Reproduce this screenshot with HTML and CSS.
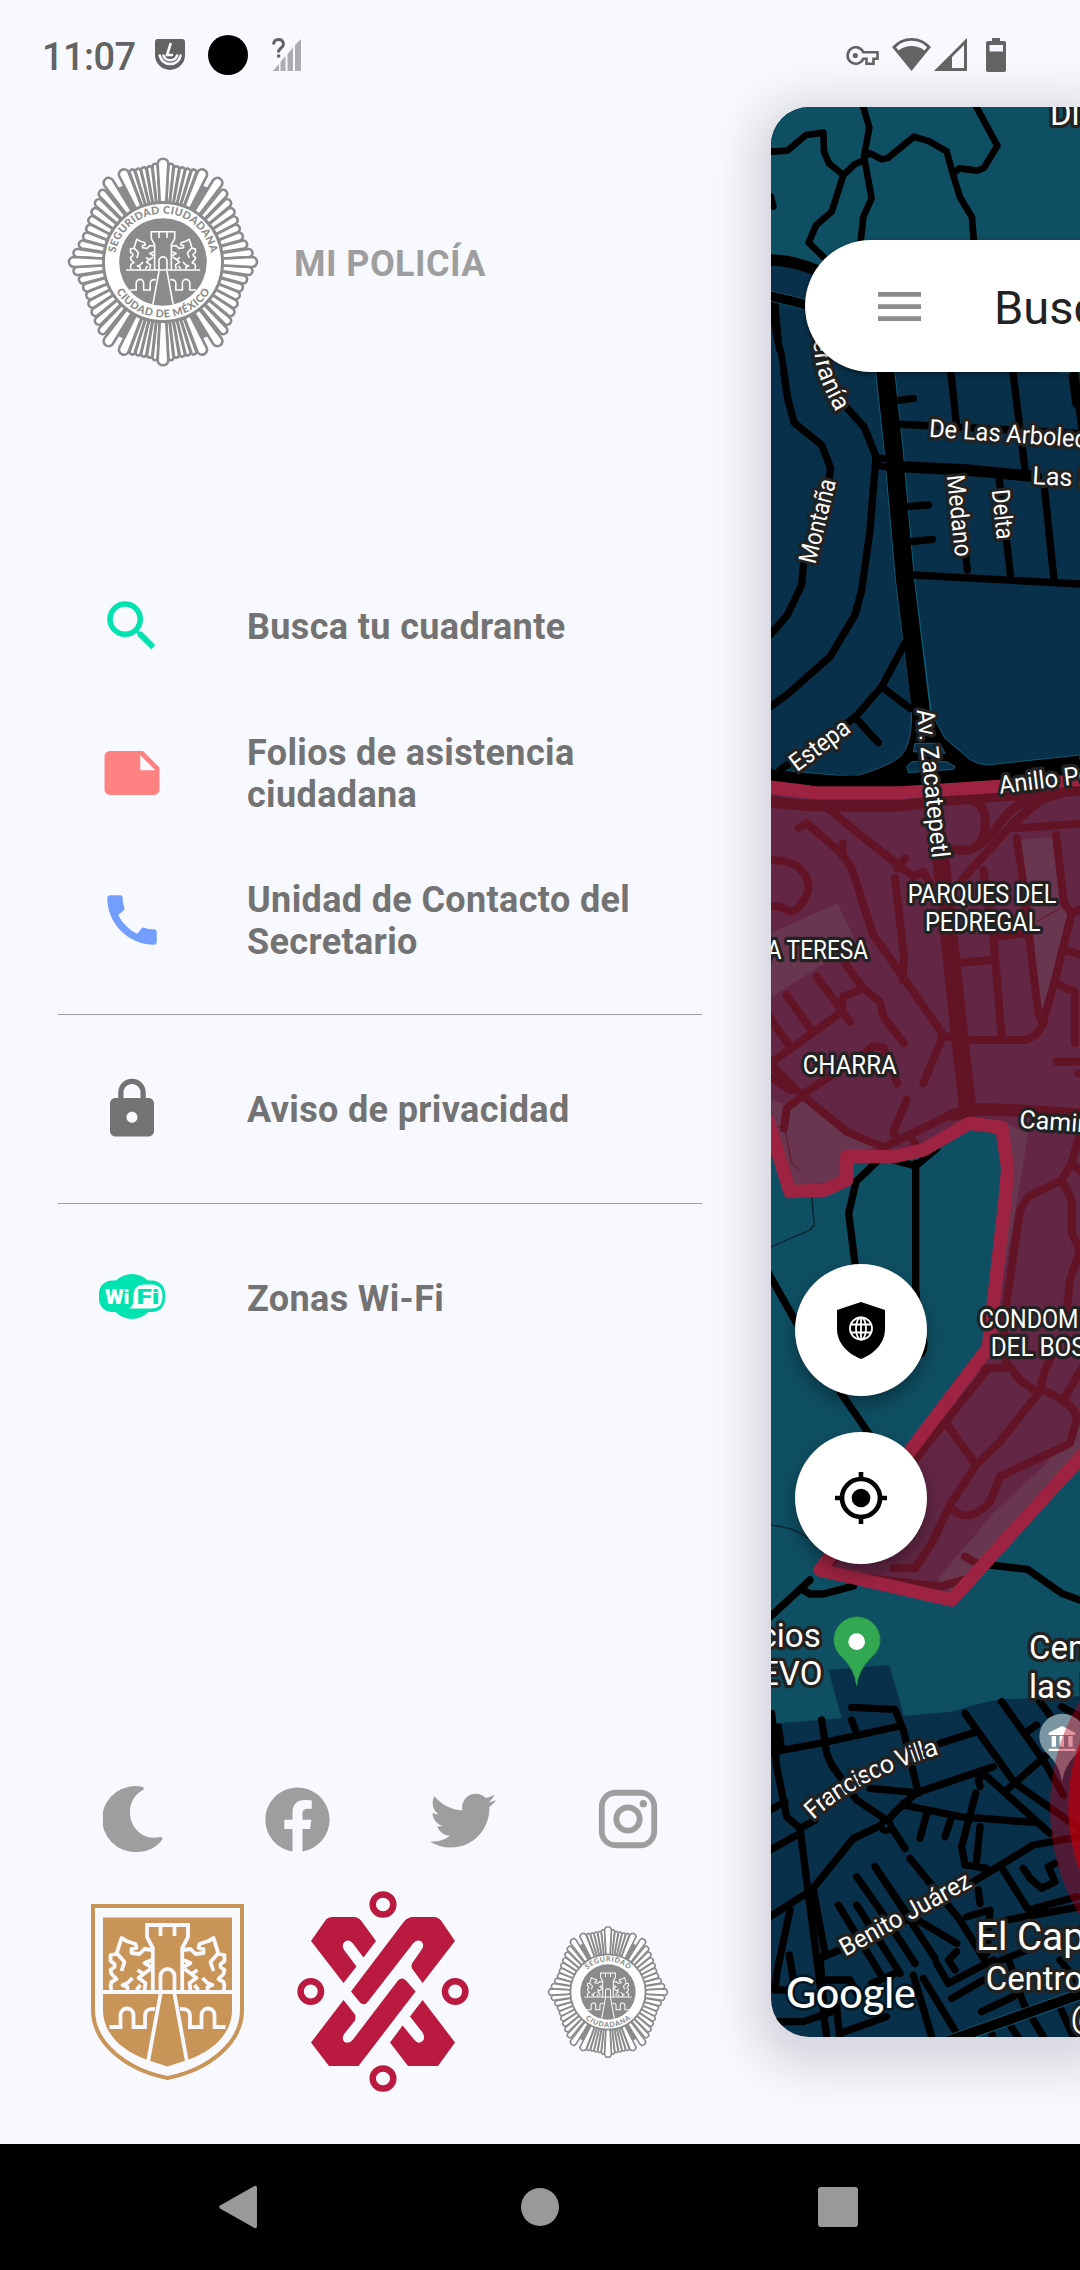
FILE: index.html
```html
<!DOCTYPE html>
<html lang="es">
<head>
<meta charset="utf-8">
<title>Mi Policía</title>
<link rel="stylesheet" href="styles.css">
</head>
<body>
<svg class="defs" width="0" height="0" aria-hidden="true">
  <defs>
    <!-- One quadrant of badge rays; mirrored to build the star -->
    <g id="rays">
      <path transform="rotate(4.7)" d="M0 0L-2.6-96a2.6 2.6 0 0 1 5.2 0z"/>
      <path transform="rotate(8.2)" d="M0 0L-2.6-94a2.6 2.6 0 0 1 5.2 0z"/>
      <path transform="rotate(11.8)" d="M0 0L-2.6-94a2.6 2.6 0 0 1 5.2 0z"/>
      <path transform="rotate(15.3)" d="M0 0L-2.6-94a2.6 2.6 0 0 1 5.2 0z"/>
      <path transform="rotate(18.9)" d="M0 0L-2.6-95a2.6 2.6 0 0 1 5.2 0z"/>
      <path transform="rotate(41.5)" d="M0 0L-4-91a4 4 0 0 1 8 0z"/>
      <path transform="rotate(47.5)" d="M0 0L-4-87a4 4 0 0 1 8 0z"/>
      <path transform="rotate(53.5)" d="M0 0L-4-84a4 4 0 0 1 8 0z"/>
      <path transform="rotate(59.5)" d="M0 0L-4-82a4 4 0 0 1 8 0z"/>
      <path transform="rotate(65.5)" d="M0 0L-4-80a4 4 0 0 1 8 0z"/>
      <path transform="rotate(71.5)" d="M0 0L-4-80a4 4 0 0 1 8 0z"/>
      <path transform="rotate(77.7)" d="M0 0L-4-82a4 4 0 0 1 8 0z"/>
      <path transform="rotate(84)" d="M0 0L-4-86a4 4 0 0 1 8 0z"/>
      <path d="M26-50L36-78 50-72 36-45z" class="ray-gap"/>
      <path transform="rotate(24)" d="M0 0L-5-96a5 5 0 0 1 10 0z"/>
      <path transform="rotate(34.5)" d="M0 0L-5-96a5 5 0 0 1 10 0z"/>
    </g>
    <g id="lion" stroke-linejoin="round">
      <path d="M-56-2L-57-6-56-10-51-13-56-18-57-22-53-25-53-28-57-31-57-37-51-38-46-54-41-51-32-48-31-44-36-43-36-39-28-38-23-43-16-42M-50-38L-43-30-46-21M-16-32L-23-29-16-25M-30-22L-24-18-17-23M-24-18L-29-14-22-9-23-2M-35-14L-40-9-45-7-40-5V-1M-27-7L-31-2"/>
    </g>
    <g id="castle">
      <path d="M-65 0H65M-14.7 0V-44L-20.5-55V-67H20.5V-55L14.7-44V0M-7-66V-56M7-66V-56M-7 0V-16a7 7 0 0 1 14 0V0"/>
      <path d="M-7 2L-19.5 70M7 2L19.5 70M-58 35H-47V23a6.5 6.5 0 0 1 13 0V35H-22.5V24q0-8 10-7M58 35H47V23a6.5 6.5 0 0 0-13 0V35H22.5V24q0-8-10-7"/>
      <use href="#lion"/><use href="#lion" transform="scale(-1 1)"/>
    </g>
    <g id="badge">
      <g fill="#fff" stroke="#8a8b8c" stroke-width="2.6">
        <use href="#rays"/><use href="#rays" transform="scale(-1 1)"/><use href="#rays" transform="scale(1 -1)"/><use href="#rays" transform="scale(-1 -1)"/>
        <path id="v-ray" d="M0 0L-5.3-98a5.3 5.3 0 0 1 10.6 0z"/>
        <use href="#v-ray" transform="scale(1 -1)"/>
        <path id="h-ray" d="M0 0L89-5a5 5 0 0 1 0 10z"/>
        <use href="#h-ray" transform="scale(-1 1)"/>
      </g>
      <circle r="59.5" fill="#fff" stroke="#8a8b8c" stroke-width="3"/>
      <circle r="43.8" fill="#8a8b8c"/>
      <g clip-path="url(#disc)"><use href="#castle" transform="translate(0 8) scale(.57)" fill="none" stroke="#fff" stroke-width="2.8"/></g>
    </g>
    <clipPath id="disc"><circle r="43.8"/></clipPath>
    <path id="arc-top" d="M-48.5 0A48.5 48.5 0 0 1 48.5 0"/>
    <path id="arc-bottom" d="M-55.5 0A55.5 55.5 0 0 0 55.5 0"/>
  </defs>
</svg>

<div class="screen">
  <div class="app">
    <header class="status">
      <span class="clock">11:07</span>
      <svg class="s-shield" width="30" height="32" viewBox="0 0 30 32"><path fill="#636363" d="M3 0H27a3 3 0 0 1 3 3V16a15 15 0 0 1-30 0V3a3 3 0 0 1 3-3z"/><path fill="none" stroke="#f8f9ff" stroke-width="2.6" stroke-linecap="round" d="M15.500 5L12 16h5M8.500 16.500a7 6.500 0 0 0 13.500 0M4.800 16.500a10.600 10.600 0 0 0 20.800 0"/></svg>
      <span class="camera"></span>
      <svg class="s-nosim" width="29" height="33" viewBox="0 0 29 33"><path fill="#acacb2" d="M1 33L7 26V33zM8.500 33V24L13.500 18V33zM15.500 33V16L21 9.500V33zM23 33V7L29 1V33z"/><path fill="none" stroke="#636363" stroke-width="3" d="M1.500 6.500Q2 1.500 6.500 1.500T11.500 6Q11.500 8 8.500 10.500 6.500 12 6.500 14.500"/><path fill="#636363" d="M5 16.500h3.200v3H5z"/></svg>
      <span class="push"></span>
      <svg class="s-key" width="33" height="20" viewBox="0 0 33 20"><path fill="none" stroke="#636363" stroke-width="2.600" d="M17.300 6.200A8.200 8.200 0 1 0 17.300 12.800H20.500V17.800H27.500V12.800H31.500V6.200Z"/><circle cx="9.300" cy="9.500" r="2.600" fill="#636363"/></svg>
      <svg class="s-wifi" width="39" height="33" viewBox="0 0 39 33"><path fill="#636363" fill-rule="evenodd" d="M19.500 33L0 9Q8 0 19.500 0T39 9zM19.500 2.800Q9.500 2.800 4 9.300L6.500 12.500Q12 8 19.500 8T32.500 12.500L35 9.300Q29.500 2.800 19.500 2.800z"/></svg>
      <svg class="s-cell" width="33" height="33" viewBox="0 0 33 33"><path fill="#636363" fill-rule="evenodd" d="M0 33L33 0V33zM18 30H30V7L18 19z"/></svg>
      <svg class="s-batt" width="20" height="34" viewBox="0 0 20 34"><path fill="#636363" fill-rule="evenodd" d="M6 0H14V3H18a2 2 0 0 1 2 2V32a2 2 0 0 1-2 2H2a2 2 0 0 1-2-2V5a2 2 0 0 1 2-2H6zM3.500 7V13.500H17V7z"/></svg>
    </header>

    <main class="main">
      <nav class="drawer">
        <div class="brand">
          <svg class="brand-badge" width="192" height="212" viewBox="-96 -106 192 212">
            <use href="#badge"/>
            <g class="ring-text" font-size="10.600"><text text-anchor="middle"><textPath href="#arc-top" startOffset="50%" textLength="134">SEGURIDAD CIUDADANA</textPath></text>
            <text text-anchor="middle"><textPath href="#arc-bottom" startOffset="50%" textLength="112">CIUDAD DE MÉXICO</textPath></text></g>
          </svg>
          <h1>MI POLICÍA</h1>
        </div>

        <ul class="menu">
          <li><svg class="ico" viewBox="0 0 24 24" fill="#00e3b0"><path d="M15.500 14h-.79l-.28-.27A6.471 6.471 0 0 0 16 9.500 6.500 6.500 0 1 0 9.500 16c1.610 0 3.090-.59 4.230-1.570l.27.28v.79l5 4.990L20.490 19l-4.990-5zm-6 0C7.010 14 5 11.990 5 9.500S7.010 5 9.500 5 14 7.010 14 9.500 11.990 14 9.500 14z"/></svg><span>Busca tu cuadrante</span></li>
          <li><svg class="ico" viewBox="0 0 24 24" fill="#ff8283"><path d="M22 10l-6-6H4c-1.100 0-2 .9-2 2v12.010c0 1.100.9 1.990 2 1.990l16-.01c1.100 0 2-.89 2-1.990v-8zm-7-4.500l5.500 5.500H15V5.500z"/></svg><span>Folios de asistencia ciudadana</span></li>
          <li><svg class="ico" viewBox="0 0 24 24" fill="#739eff"><path d="M20.010 15.380c-1.230 0-2.420-.2-3.530-.56a.977.977 0 0 0-1.010.24l-1.570 1.970c-2.830-1.350-5.480-3.900-6.890-6.830l1.950-1.660c.27-.28.35-.67.24-1.020-.37-1.110-.56-2.300-.56-3.530 0-.54-.45-.99-.99-.99H4.190C3.650 3 3 3.240 3 3.990 3 13.280 10.730 21 20.010 21c.71 0 .99-.63.99-1.180v-3.450c0-.54-.45-.99-.99-.99z"/></svg><span>Unidad de Contacto del Secretario</span></li>
          <li class="rule"></li>
          <li><svg class="ico" viewBox="0 0 24 24" fill="#737373"><path d="M18 8h-1V6c0-2.760-2.240-5-5-5S7 3.240 7 6v2H6c-1.100 0-2 .9-2 2v10c0 1.100.9 2 2 2h12c1.100 0 2-.9 2-2V10c0-1.100-.9-2-2-2zm-6 9c-1.100 0-2-.9-2-2s.9-2 2-2 2 .9 2 2-.9 2-2 2zm3.100-9H8.900V6c0-1.710 1.390-3.100 3.100-3.100 1.710 0 3.100 1.390 3.100 3.100v2z"/></svg><span>Aviso de privacidad</span></li>
          <li class="rule"></li>
          <li><svg class="ico" viewBox="0 0 66 66"><circle cx="33" cy="31.500" r="22.500" fill="#00e3b0"/><rect y="15.500" width="66" height="31.500" rx="13" fill="#00e3b0"/><path fill="#fff" d="M30 43.500Q34.500 41 34.500 35V31Q34.500 19.500 46 19.500H52.500Q63.500 19.500 63.500 31.500T52.500 43.500z"/><g font-family="Roboto" font-weight="900" font-size="20"><text x="6" y="39" textLength="24.500" lengthAdjust="spacingAndGlyphs" fill="#fff">Wi</text><text x="37.500" y="39" textLength="23" lengthAdjust="spacingAndGlyphs" fill="#00e3b0">Fi</text></g></svg><span>Zonas Wi-Fi</span></li>
        </ul>

        <div class="social">
          <svg width="60" height="66" viewBox="0 0 60 66"><path fill="#9e9e9e" d="M40 1C41 2 41 3 40 4 31 9 27 17 27 26 27 42 40 55 57 51Q60 50.500 59 54C53 62 44 66 34 66A33 33 0 1 1 40 1z"/></svg>
          <svg width="77" height="77" viewBox="0 0 24 24"><path fill="#9e9e9e" d="M12 2.040C6.500 2.040 2 6.530 2 12.060C2 17.060 5.660 21.210 10.440 21.960V14.960H7.900V12.060H10.440V9.850C10.440 7.340 11.930 5.960 14.220 5.960C15.310 5.960 16.450 6.150 16.450 6.150V8.620H15.190C13.950 8.620 13.560 9.390 13.560 10.180V12.060H16.340L15.890 14.960H13.560V21.960A10 10 0 0 0 22 12.060C22 6.530 17.500 2.040 12 2.040Z"/></svg>
          <svg width="76" height="76" viewBox="0 0 24 24"><path fill="#9e9e9e" d="M22.460,6C21.690,6.350 20.860,6.580 20,6.690C20.880,6.160 21.560,5.320 21.880,4.310C21.050,4.810 20.130,5.160 19.160,5.360C18.370,4.500 17.260,4 16,4C13.650,4 11.730,5.920 11.730,8.290C11.730,8.630 11.770,8.960 11.840,9.270C8.280,9.090 5.110,7.380 3,4.790C2.630,5.420 2.420,6.160 2.420,6.940C2.420,8.430 3.170,9.750 4.330,10.500C3.620,10.500 2.960,10.300 2.380,10C2.380,10 2.380,10 2.380,10.030C2.380,12.110 3.860,13.850 5.820,14.240C5.460,14.340 5.080,14.390 4.690,14.390C4.420,14.390 4.150,14.360 3.890,14.310C4.430,16 6,17.260 7.890,17.290C6.430,18.450 4.580,19.130 2.560,19.130C2.220,19.130 1.880,19.110 1.540,19.070C3.440,20.290 5.700,21 8.120,21C16,21 20.330,14.460 20.330,8.790C20.330,8.600 20.330,8.420 20.320,8.230C21.160,7.630 21.880,6.870 22.460,6Z"/></svg>
          <svg width="70" height="70" viewBox="0 0 24 24"><path fill="#9e9e9e" d="M7.800,2H16.200C19.400,2 22,4.600 22,7.800V16.200A5.800,5.800 0 0,1 16.200,22H7.800C4.600,22 2,19.400 2,16.200V7.800A5.800,5.800 0 0,1 7.800,2M7.600,4A3.600,3.600 0 0,0 4,7.600V16.400C4,18.390 5.610,20 7.600,20H16.400A3.600,3.600 0 0,0 20,16.400V7.600C20,5.610 18.390,4 16.400,4H7.600M17.250,5.500A1.250,1.250 0 0,1 18.500,6.750A1.250,1.250 0 0,1 17.250,8A1.250,1.250 0 0,1 16,6.750A1.250,1.250 0 0,1 17.250,5.500M12,7A5,5 0 0,1 17,12A5,5 0 0,1 12,17A5,5 0 0,1 7,12A5,5 0 0,1 12,7M12,9A3,3 0 0,0 9,12A3,3 0 0,0 12,15A3,3 0 0,0 15,12A3,3 0 0,0 12,9Z"/></svg>
        </div>

        <div class="logos">
          <svg width="153" height="176" viewBox="-76.500 -88 153 176">
            <path fill="none" stroke="#c99457" stroke-width="4" d="M-74.500-86H74.500V18C74.500 52 40 78 0 86-40 78-74.500 52-74.500 18z"/>
            <path fill="#c99457" d="M-64.500-74.500H64.500V18C64.500 40 48 58 20 68L0 74.500-20 68C-48 58-64.500 40-64.500 18z"/>
            <use href="#castle" fill="none" stroke="#f8f9ff" stroke-width="3.800"/>
          </svg>
          <svg width="172" height="201" viewBox="-86 -100.500 172 201">
            <g fill="none" stroke="#ba1a3f" stroke-width="6.500"><ellipse cy="-87" rx="10.300" ry="10"/><ellipse cy="87" rx="10.300" ry="10"/><circle cx="-72.200" r="10.200"/><circle cx="72.200" r="10.200"/></g>
            <g fill="#ba1a3f">
              <path d="M-72-50.500L-57-72Q-55-74.500-51-74.500H-29Q-25-74.500-22-71L-7-50.500-19.500-34-30-48Q-34-53-38.500-49.500-42-46-38.500-41L-26.500-25-39.500-8.500z"/>
              <path d="M-32 0L21-70Q25-74.500 30-74.500H51Q55-74.500 58-71L72-50.500 39.600-8.500 29-23Q28-26 29-28L38-41Q42-46 38.500-50 34-53 30-48L-15 10Q-19 15-23 11z"/>
              <path d="M-72 51L-39.500 8.500-28 23Q-27 26-28 29L-38.500 42Q-42 47-38.500 50.500-34 53-30 48L15-11Q19-15 23-11L32.600 0-24.500 74.500H-54z"/>
              <path d="M39.600 8.500L72 51 55 74.500H25L7 51 19.600 34 31 48Q35 53 39 50 43 47 39.500 41L27 25z"/>
            </g>
          </svg>
          <svg width="122" height="134" viewBox="-96 -106 192 212">
            <use href="#badge"/>
            <g class="ring-text" font-size="11"><text text-anchor="middle"><textPath href="#arc-top" startOffset="50%" textLength="72">SEGURIDAD</textPath></text>
            <text text-anchor="middle"><textPath href="#arc-bottom" startOffset="50%" textLength="78">CIUDADANA</textPath></text></g>
          </svg>
        </div>
      </nav>

      <section class="map-card">
        <svg class="map" width="309" height="1930" viewBox="771 107 309 1930">
          <rect x="771" y="107" width="309" height="1930" fill="#09304a"/>
          <!-- north: park -->
          <g transform="scale(.33333) translate(2220 0)">
            <path fill="#0f4f63" d="M90 300H1030V1122L960 1122 400 900 230 812 90 775z"/>
            <g class="road r20"><path d="M90 455L142 452 198 405 250 398 252 455 267 490 310 525 345 492 370 482M368 315L388 382 372 470 395 595 370 650 362 725 340 760M310 525L275 635 228 676 206 728 270 790M372 470L390 460 425 478 445 473 522 410 568 424 620 454 638 520 660 592 696 652 702 730M706 315L772 437 732 503 712 512 658 505 640 520M93 590L100 620M90 895L112 1020 124 1060 145 1210M105 905L118 1050"/></g>
            <g class="road r34"><path d="M90 780Q160 780 240 815"/></g>
            <path stroke="#0f5a75" fill="none" stroke-width="32" d="M90 888Q140 898 220 920"/>
            <g class="road r28"><path d="M90 888Q140 898 220 920M1000 1130L1010 1210"/></g>
            <text class="lbl big" x="930" y="374">Di</text>
          </g>
          <!-- Zacatepetl -->
          <g transform="translate(760 380) scale(.33333)">
            <path stroke="#0f5a75" stroke-width="60" fill="none" d="M372-60L400 200 435 600 487 1010"/>
            <path fill="#000" stroke="#0f5a75" stroke-width="3" d="M455 1000Q455 1100 420 1130T280 1190L35 1168V1215H960V1125L680 1155Q640 1150 620 1130L555 1075 515 1000z"/>
            <path stroke="#000" stroke-width="54" fill="none" d="M372-60L400 200 435 600 487 1030V1150"/>
            <path fill="#09304a" stroke="#0f5a75" stroke-width="3" d="M440 1160L455 1145H560L585 1160 580 1168 445 1178zM460 1115L465 1090H540L555 1120z"/>
            <g class="road r22"><path d="M72-20L82 50 102 128 185 195 212 265 205 310M130 555L125 615 82 705 30 765M262 85L312 140 348 230 330 450 305 630 285 705 210 830 80 945 30 980M348 235H385M350 255L385 262M410 62L460 55M405 132L960 160M572-30L590 140M758-30L795 270M943-30L965 140M440 380L505 375M455 485L517 478M460 585L960 612M618 530L622 570M718 300L752 590M852 310L882 600M440 780L365 920 285 1012 60 1170M365 920L450 985M285 1012L355 1088"/></g>
            <g class="road r34"><path d="M420 260L620 270 830 290"/></g>
            <path stroke="#000" stroke-width="50" fill="none" d="M20 1190L170 1212H420L1000 1160"/>
          </g>
          <!-- highlighted quadrant and the woods south of it -->
          <g transform="translate(760 780) scale(.33333)">
            <path fill="#0f4f63" d="M20 1000H980V2748L720 2758 640 2775 575 2795 432 2808 388 2655 205 2670 245 2815 20 2832z"/>
            <g class="road r22"><path d="M355 1140L288 1205 266 1300 290 1490M400 1140L467 1158 530 1105M467 1150V1520Q470 1600 490 1680 495 1700 485 1720M20 1470L110 1630 250 1850 340 1980M20 2520L150 2400M130 2430L150 2442H190L280 2418M690 2355L802 2368 905 2440 980 2468"/></g>
            <path class="trail" d="M155 1250L163 1335 150 1350 30 1402M30 2235Q100 2240 145 2275T190 2320"/>
            <path fill="#632745" d="M20 15L160 37H420L1000-5V1990L575 2460 180 2370 685 1702 743 1165 725 1042 628 1030 490 1110 400 1130H260V1200L195 1230 90 1235 20 1000z"/>
            <path fill="#68364f" d="M35 458L232 370 290 490 35 650zM35 960L85 975 122 950 255 1060 370 1100 260 1120 240 1200 100 1220 35 1030zM780 180L880 170 905 380 935 400 845 700 810 420zM740 1030L805 1060 760 1330 690 1690 720 1390zM860 2050L980 1900V2050L580 2450 535 2395 700 2200z"/>
            <g class="qroad"><path stroke-width="34" d="M20 62Q90 75 200 78H420L560 60 960 30"/>
              <path stroke-width="52" d="M535 170L560 400 600 780 625 1000"/>
              <path stroke-width="38" d="M580 1005L640 988 740 990 980 1005"/>
              <path stroke-width="27" d="M560 60Q680 40 676 130T600 210M560 210H630Q680 190 720 130T830 50M760 130L840 60 960 20"/>
              <path stroke-width="24" d="M115 145L140 130 250 225 275 265 340 465 425 585 550 765 490 910M248 190V230M210 90L300 165 460 290 490 275 510 310M435 235L412 265M405 295L432 530 428 600M20 240Q90 240 115 262T145 310 125 370 80 390 20 380M170 590L270 725M80 645L150 745M20 700L90 800M30 850L240 700 250 650 310 625 255 550M310 625L360 665 370 710 432 790M30 850L125 945 260 1055 370 1102 580 1000M125 945L300 830 340 798 370 803 412 910M130 945L80 985 72 1045M30 890L90 930M440 960L400 1055 412 1085M455 1075L470 1100M545 770H580M620 780H795Q835 770 850 725L885 600 935 400 980 380M600 548L695 540 M670 270L700 470 725 770M700 470L805 460M795 360L818 560 835 700 850 735M770 175L800 380M888 165L912 370 935 400M605 300L760 130M760 145L980 130M915 510L980 530M885 610L945 635V790M890 845H980M955 880H980M960 1060L935 1150 980 1190M935 1150L905 1200 805 1250 780 1290 735 1600 730 1700M905 1200L935 1260V1360L960 1410 930 1500 915 1640"/>
              <path stroke-width="24" d="M670 1765H740M735 1740L780 1800 835 1840 720 1985 648 2055 570 2175 515 2290 465 2365H400M835 1840L855 1770 890 1700M850 1830L910 1860 980 1740M910 1865Q950 1885 950 1920L930 1990 720 2090 690 2165Q620 2240 570 2180M555 1925L648 2055M685 1765L440 2070 215 2350M615 2330L650 2350M330 2395L540 2420 610 2400"/></g>
            <path fill="none" stroke="#621426" stroke-width="3" d="M830 425L905 382 940 400M50 1040L75 1045 95 1150 118 1170"/>
            <path fill="none" stroke="#9e2342" stroke-width="40" stroke-linejoin="round" d="M20 20L160 37H420L720 18 1000-5V1990L575 2460 180 2370 685 1702 735 1260 743 1165 725 1042 628 1030 490 1110 400 1130H260V1200L195 1230 90 1235 20 1010"/>
            <path stroke="#000" stroke-width="30" fill="none" d="M90-10L170 4H420L1000-35"/>
          </g>
          <!-- southern streets -->
          <g transform="translate(760 1620) scale(.33333)">
            <g class="road r22"><path d="M30 400L70 390 190 368 420 318M55 320L65 390M275 262L405 268 430 330 475 520M185 300L200 400 215 435 290 540 380 600 435 685M275 300L288 335M35 280L50 440 80 590 120 625 165 600M120 625L200 1250M30 570L75 545M30 690L120 640M30 890L155 810 280 655 375 610 430 550M330 505L470 518 700 440M470 518L400 580M430 555L600 590 830 608M500 580L480 655M575 590L555 650M540 370L650 335M615 280L765 490 980 640M725 245L850 420 910 525M840 245L880 300M830 315L795 340M740 510L900 370M660 500L655 480 670 460 870 640M647 520L605 680 615 735 680 745M660 620L648 740M600 810L820 675 960 650M345 740L440 880 590 970M450 715L600 900 680 1030M290 770L360 870 465 1030M235 855L360 1060M290 855L420 1060M345 740L525 1015M720 735L805 870 950 830M790 745L810 775 845 805 885 785 865 740 885 730M180 1015L420 910 620 790M90 870L50 1060 45 1110H80M88 1005L100 1080M180 1010L190 1140M200 1080H270L290 1120M335 1090L405 1060M460 1065L515 1250M490 1075L590 1240M530 1030L565 1090 700 1020M590 995L565 1020 585 1050M575 1135L670 1080M665 1175L760 1130M700 1030L980 920M750 1030L790 1150 850 1250M690 1220L700 1260M740 1200L780 1260M895 1150L940 1250M35 1205H130L230 1170M230 1160L240 1260M240 1240L380 1190M160 810L195 1000M620 890L690 870 680 1000M740 900L960 860M655 810L660 850M905 260L980 300M900 1020L980 1120"/></g>
            <circle cx="378" cy="618" r="24"/><circle cx="378" cy="618" r="5" fill="#09304a"/>
            <path stroke="#0f5a75" stroke-width="36" fill="none" d="M560 1265L800 1180 980 1115"/><path stroke="#000" stroke-width="30" fill="none" d="M550 1268L800 1180 990 1112"/>
            <path fill="#33a853" stroke="#2c9548" stroke-width="3" d="M290 196Q285 150 250 115 222 90 222 60A69 69 0 0 1 360 60Q360 90 331 115 295 150 290 196z"/><circle cx="290" cy="65" r="25" fill="#fff"/>
            <path fill="#7b95a3" d="M906 488Q901 440 866 405 838 380 838 350A69 69 0 0 1 976 350Q976 380 947 405 911 440 906 488z"/>
            <path fill="#fff" d="M866 345V338L906 318 946 338V345zM875 348H888V380H875zM899 348H912V380H899zM925 348H938V380H925zM866 386H946V393H866z"/>
            <circle cx="1495" cy="565" r="625" fill="#b3001b" opacity=".42"/>
            <circle cx="1490" cy="560" r="565" fill="#b8000c" opacity=".72"/>
          </g>
          <!-- labels -->
          <g transform="translate(760 380) scale(.33333)" class="lbl">
            <path id="serrania" fill="none" stroke="none" d="M158-230Q158-120 166-60T229 97"/>
            <path id="villa" fill="none" stroke="none" d="M160 4320Q300 4190 555 4118"/>
            <text text-anchor="end"><textPath href="#serrania" startOffset="100%">Serranía</textPath></text>
            <text transform="translate(166 554) rotate(-76)" textLength="258" lengthAdjust="spacingAndGlyphs">Montaña</text>
            <text transform="translate(506 170) rotate(4)" textLength="552" lengthAdjust="spacingAndGlyphs">De Las Arboledas</text>
            <text transform="translate(816 312) rotate(3)">Las Flores</text>
            <text transform="translate(560 287) rotate(84)" textLength="246" lengthAdjust="spacingAndGlyphs">Medano</text>
            <text transform="translate(695 331) rotate(84)" textLength="150" lengthAdjust="spacingAndGlyphs">Delta</text>
            <text transform="translate(112 1177) rotate(-37)" textLength="205" lengthAdjust="spacingAndGlyphs">Estepa</text>
            <text transform="translate(470 990) rotate(84)" textLength="448" lengthAdjust="spacingAndGlyphs">Av. Zacatepetl</text>
            <text transform="translate(720 1241) rotate(-7)" textLength="500" lengthAdjust="spacingAndGlyphs">Anillo Periférico</text>
            <text x="443" y="1568" textLength="446" lengthAdjust="spacingAndGlyphs">PARQUES DEL</text>
            <text x="495" y="1652" textLength="346" lengthAdjust="spacingAndGlyphs">PEDREGAL</text>
            <text x="-150" y="1737" textLength="474" lengthAdjust="spacingAndGlyphs">SANTA TERESA</text>
            <text x="128" y="2083" textLength="282" lengthAdjust="spacingAndGlyphs">CHARRA</text>
            <text transform="translate(777 2243) rotate(4)">Camino</text>
            <text x="656" y="2845" textLength="436" lengthAdjust="spacingAndGlyphs">CONDOMINIO</text>
            <text x="692" y="2929" textLength="424" lengthAdjust="spacingAndGlyphs">DEL BOSQUE</text>
            <text><textPath href="#villa" textLength="430">Francisco Villa</textPath></text>
            <text transform="translate(256 4730) rotate(-29)" textLength="438" lengthAdjust="spacingAndGlyphs">Benito Juárez</text>
            <g class="big"><text x="182" y="3800" text-anchor="end">Servicios</text>
            <text x="187" y="3916" text-anchor="end">NUEVO</text>
            <text x="807" y="3836">Centro</text><text x="807" y="3953">las Flores</text>
            <text x="677" y="4831">Centro</text><text x="932" y="4945">@</text></g>
            <text x="648" y="4709" class="huge">El Capulín</text>
            <text x="78" y="4885" class="google" textLength="390" lengthAdjust="spacingAndGlyphs">Google</text>
          </g>
        </svg>
        <div class="overlay">
          <div class="search">
            <svg width="43" height="29" viewBox="0 0 43 29"><path fill="#8c8c8c" d="M0 0H43V4.700H0zM0 12.200H43V16.900H0zM0 24.200H43V28.900H0z"/></svg>
            <span>Busca tu cuadrante</span>
          </div>
          <button class="fab"><svg width="48" height="57" viewBox="0 0 48 57"><path d="M24 0L48 8V27C48 41 37 52 24 57 11 52 0 41 0 27V8z"/><g fill="none" stroke="#fff" stroke-width="1.800"><circle cx="24" cy="26.500" r="11"/><ellipse cx="24" cy="26.500" rx="5" ry="11"/><path d="M24 15.500V37.500M14 22.500H34M14 30.500H34"/></g></svg></button>
          <button class="fab"><svg width="52" height="52" viewBox="0 0 52 52"><circle cx="26" cy="26" r="9.300"/><circle cx="26" cy="26" r="19" fill="none" stroke="#000" stroke-width="4.700"/><path d="M23.700 0h4.600v7h-4.600zM23.700 45h4.600v7h-4.600zM0 23.700h7v4.600H0zM45 23.700h7v4.600h-7z"/></svg></button>
        </div>
      </section>
    </main>
  </div>

  <footer class="navbar">
    <svg width="38" height="44" viewBox="0 0 38 44"><path fill="#999" d="M35.500 1Q38 0 38 3V41Q38 44 35.500 43L1 23.500Q-.5 22 1 20.500z"/></svg>
    <svg width="38" height="38" viewBox="0 0 38 38"><circle cx="19" cy="19" r="19" fill="#999"/></svg>
    <svg width="40" height="40" viewBox="0 0 40 40"><rect width="40" height="40" rx="3" fill="#999"/></svg>
  </footer>
</div>
</body>
</html>
```
FILE: styles.css
```css
* { box-sizing: border-box; }
body { margin: 0; font-family: Roboto, "Liberation Sans", sans-serif; background: #f8f9ff; }
.defs { position: absolute; }
.screen { width: 1080px; height: 2270px; display: flex; flex-direction: column; overflow: hidden; }
.app { height: 2144px; display: flex; flex-direction: column; overflow: hidden; }

.status { position: relative; z-index: 2; height: 107px; flex: none; display: flex; align-items: flex-start; padding: 0 74px 0 42px; }
.clock { width: 113px; padding-top: 35px; font-size: 38px; line-height: 44px; font-weight: 500; letter-spacing: -.6px; color: #636363; }
.s-shield { margin-top: 39px; }
.camera { width: 40px; height: 40px; border-radius: 50%; background: #000; margin: 35px 0 0 23px; }
.s-nosim { margin: 38px 0 0 24px; }
.push { flex: 1; }
.s-key { margin: 46px 13px 0 0; }
.s-wifi { margin: 38px 3px 0 0; }
.s-cell { margin: 38px 19px 0 0; }
.s-batt { margin-top: 38px; }

.main { display: flex; align-items: flex-start; height: 2037px; }
.drawer { width: 771px; height: 2037px; flex: none; display: flex; flex-direction: column; }
.brand { display: flex; align-items: center; padding: 49px 0 0 67px; }
.brand h1 { margin: 4px 0 0 35px; font-size: 36px; line-height: 42px; font-weight: 700; letter-spacing: .42px; color: #9e9e9e; }
.ray-gap { fill: #8a8b8c; stroke: none; }
.ring-text { font-family: Lato, sans-serif; font-weight: 900; fill: #8a8b8c; }

.menu { list-style: none; margin: 184px 69px 0 58px; padding: 0; }
.menu li { height: 147px; display: flex; align-items: center; }
.menu .ico { width: 66px; height: 66px; margin: 0 82px 0 41px; flex: none; }
.menu span { width: 400px; padding-top: 3px; font-size: 36px; line-height: 42px; font-weight: 700; letter-spacing: .36px; color: #737373; }
.menu .rule { height: 42px; }
.menu .rule::before { content: ""; width: 100%; height: 1px; background: #a0a0a0; }

.social { display: grid; grid-template-columns: repeat(4, 165px); place-items: center; height: 80px; margin: 408px 0 0 50px; }
.logos { display: flex; align-items: center; height: 201px; margin: 32px 0 0 91px; }
.logos svg + svg { margin-left: 53px; }
.logos svg:last-child { margin-left: 78px; }

.map-card { position: relative; width: 309px; height: 1930px; flex: none; border-radius: 38px 0 0 38px; box-shadow: 0 12px 44px 20px rgba(20, 5, 20, .14); }
.map { position: absolute; inset: 0; border-radius: 38px 0 0 38px; }
.overlay { position: relative; height: 100%; overflow: hidden; border-radius: 38px 0 0 38px; padding-top: 133px; }
.search { display: flex; align-items: center; width: 400px; height: 132px; margin-left: 34px; padding-left: 73px; border-radius: 66px; background: #fff; box-shadow: 0 2px 5px rgba(0, 0, 0, .5); white-space: nowrap; font-size: 47px; color: #222; }
.search svg { flex: none; margin-right: 73px; }
.search span { padding-top: 2px; }
.fab { display: flex; align-items: center; justify-content: center; width: 132px; height: 132px; margin: 0 0 36px 24px; padding: 0; border: 0; border-radius: 50%; background: #fff; box-shadow: 0 8px 18px rgba(0, 0, 0, .35); }
.search + .fab { margin-top: 892px; }

.road { fill: none; stroke: #000; stroke-linecap: round; stroke-linejoin: round; }
.r20 { stroke-width: 20; }
.r22 { stroke-width: 22; }
.r28 { stroke-width: 28; }
.r34 { stroke-width: 34; }
.trail { fill: none; stroke: #06202c; stroke-width: 4; }
.qroad { fill: none; stroke: #621426; stroke-linecap: round; stroke-linejoin: round; }
.lbl { font-size: 75px; fill: #fff; stroke: #222; stroke-width: 20px; stroke-linejoin: round; paint-order: stroke; }
.lbl .big, .lbl.big { font-size: 99px; }
.lbl .huge { font-size: 116px; }
.lbl .google { font-family: Lato, sans-serif; font-size: 126px; font-weight: 500; stroke: rgba(0, 0, 0, .5); stroke-width: 16px; }

.navbar { height: 126px; background: #000; display: grid; grid-template-columns: 321px 300px 1fr; align-items: center; padding-left: 219px; }
.navbar svg:nth-child(2) { margin-left: -19px; }
.navbar svg:nth-child(3) { margin-left: -22px; }
```
